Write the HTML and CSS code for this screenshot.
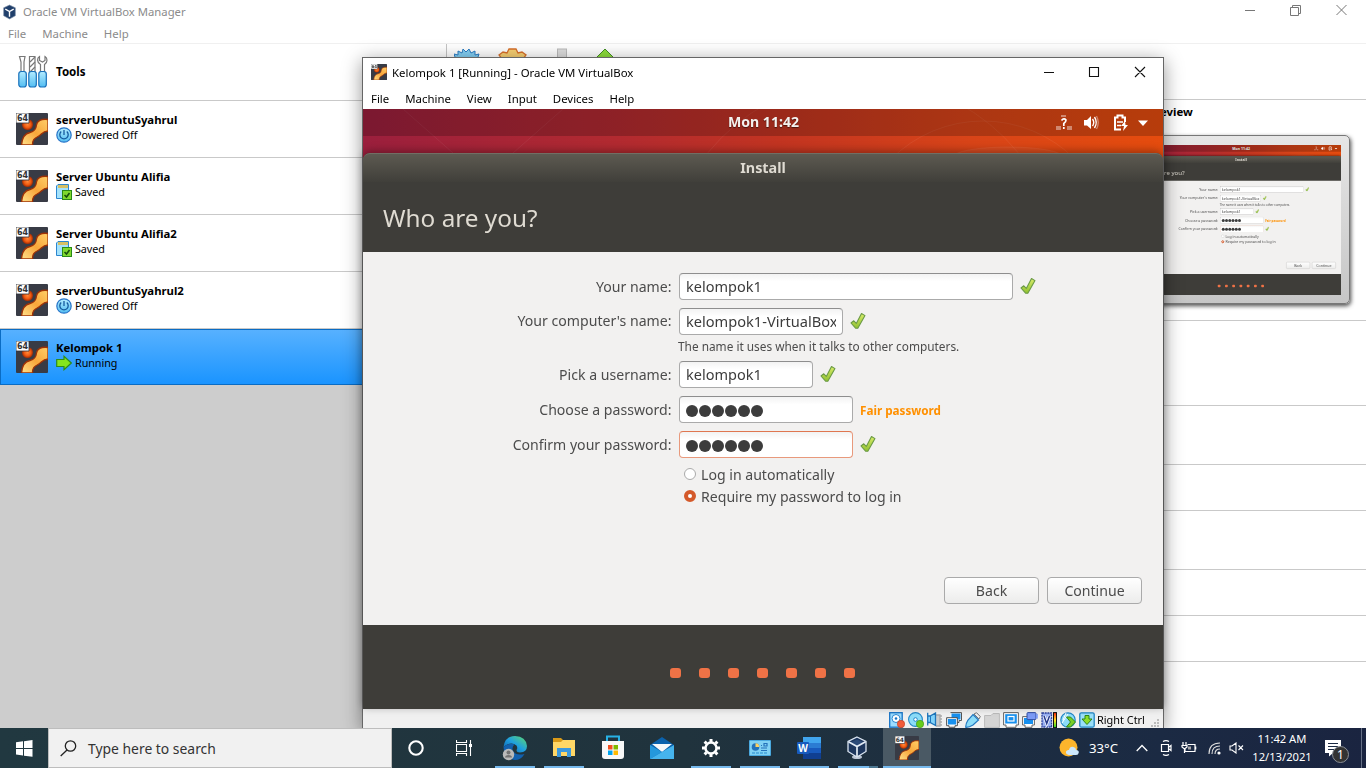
FILE: index.html
```
<!DOCTYPE html>
<html lang="en">
<head>
<meta charset="utf-8">
<title>Oracle VM VirtualBox Manager</title>
<link rel="stylesheet" href="styles.css">
</head>
<body>
<svg class="defs" width="0" height="0" aria-hidden="true">
  <defs>
    <linearGradient id="gold" x1="0" y1="1" x2="1" y2="0"><stop offset="0" stop-color="#ffe08a"/><stop offset=".5" stop-color="#f8a63a"/><stop offset="1" stop-color="#ffcf68"/></linearGradient>
    <radialGradient id="ball"><stop offset="0" stop-color="#ff8a3c"/><stop offset=".6" stop-color="#f05a10"/><stop offset="1" stop-color="#a32c04"/></radialGradient>
    <linearGradient id="sky" x1="0" y1="0" x2="0" y2="1"><stop offset="0" stop-color="#b4ecff"/><stop offset="1" stop-color="#52bdf2"/></linearGradient>
    <linearGradient id="tick" x1="0" y1="0" x2="0" y2="1"><stop offset="0" stop-color="#d9ec6a"/><stop offset="1" stop-color="#8fc02f"/></linearGradient>
    <linearGradient id="edge" x1="0" y1="1" x2="1" y2="0"><stop offset="0" stop-color="#0c59a4"/><stop offset=".5" stop-color="#1f9fe0"/><stop offset="1" stop-color="#5fdc6a"/></linearGradient>
    <linearGradient id="heat" x1="0" y1="0" x2="0" y2="1"><stop offset="0" stop-color="#f21"/><stop offset=".5" stop-color="#fd2"/><stop offset="1" stop-color="#2d2"/></linearGradient>
  </defs>
  <symbol id="ubuntu" viewBox="0 0 32 32">
    <rect width="32" height="32" rx="1" fill="#383b45"/>
    <path d="M32 6.500C25 5.500 21 8 20.500 12C20 17 18 18.500 14 19.500C8 20.500 6 26 5.500 32H16.500C16.500 27 18 25.500 22 23.500C26 21.500 26 18.500 32 18Z" fill="url(#gold)" stroke="#9e3206" stroke-width="1.300"/>
    <circle cx="11.500" cy="11.500" r="5.500" fill="url(#ball)"/>
    <path d="M0 0H13V10H0Z" fill="#fff" stroke="#30323a" stroke-width=".8"/>
    <text class="bits" x="6.500" y="8.200" text-anchor="middle">64</text>
  </symbol>
  <symbol id="power" viewBox="0 0 16 16">
    <circle cx="8" cy="8" r="7.200" fill="url(#sky)" stroke="#2775c9" stroke-width="1.200"/>
    <path d="M5.200 4.600A4.200 4.200 0 1 0 10.800 4.600M8 3V8" fill="none" stroke="#155a9e" stroke-width="1.300"/>
  </symbol>
  <symbol id="saved" viewBox="0 0 16 16">
    <path d="M.5 2L2 .5H12.500V14.500H.5Z" fill="#a5e2fb" stroke="#2c86cf"/>
    <path d="M3 1V4M5 1V4M7 1V4M9 1V4M11 1V4" stroke="#f2ae12" stroke-width="1.300"/>
    <rect x="6.500" y="6.500" width="9" height="9" fill="#7fd92f" stroke="#2b8a17"/>
    <path d="M8.500 11L10.500 13L13.500 9" fill="none" stroke="#174d0c" stroke-width="1.600"/>
  </symbol>
  <symbol id="running" viewBox="0 0 16 16"><path d="M.7 4.500H8V1.300L15.300 8L8 14.700V11.500H.7Z" fill="#85e51f" stroke="#2e8b18" stroke-width="1.200"/></symbol>
  <symbol id="check" viewBox="0 0 16 18"><path d="M1 11L3.800 8.800L6.300 11.400L11.500 1.500L15 3.600L7.800 16.300H5.800Z" fill="url(#tick)" stroke="#6a9a45" stroke-width="1.100" stroke-linejoin="round"/></symbol>
  <symbol id="cube" viewBox="0 0 20 24">
    <ellipse cx="10" cy="21" rx="5" ry="2" fill="#b9c3d3"/>
    <path d="M10 1L19 5.500V15.500L10 21L1 15.500V5.500Z" fill="#1d365d" stroke="#dbe5f2" stroke-width="1.300"/>
    <path d="M3 6.500L10 3.500L17 6.500L10 10Z" fill="#2b4a78"/>
    <path d="M1.500 5.700L10 10.500L18.500 5.700M10 10.500V20" fill="none" stroke="#e3ebf5" stroke-width="1.700"/>
  </symbol>
</svg>

<div class="desktop">
  <main class="manager">
    <header class="manager-title">
      <svg class="app-icon" viewBox="0 0 14 16"><path d="M7 .5L13.300 3.500V12L7 15.500L.7 12V3.500Z" fill="#203f6b" stroke="#8495ac" stroke-width=".7"/><path d="M2.500 5L7 7.500L11.500 5M7 7.500V13" fill="none" stroke="#fff" stroke-width="1.500"/></svg>
      <span>Oracle VM VirtualBox Manager</span>
      <svg class="caption-buttons" viewBox="0 0 104 12"><path d="M0 6.500H10M45.500 3.500H53.500V11.500H45.500ZM47.500 3.500V1.500H55.500V9.500H53.500M91.500 1L101.500 11M101.500 1L91.500 11" fill="none" stroke="#777"/></svg>
    </header>
    <nav class="manager-menu"><span>File</span><span>Machine</span><span>Help</span></nav>
    <div class="manager-body">
      <aside class="machines">
        <div class="machine tools">
          <svg class="tools-icon" viewBox="0 0 30 34">
            <g fill="#fff" stroke="#777" stroke-width="1.200"><path d="M1.500 1.500H7L6 7V17H3V7Z"/><path d="M11.500 1.500H17V17H11.500Z"/><path d="M22.500 17V9.500C18.500 7 19 3 21.500 1.500V5.500L24.500 7L27 5.500V1.500C29.500 3 30 7 26.500 9.500V17Z"/><path d="M12 7L17 2M12 12L17 7M12 17L17 12"/></g>
            <g fill="url(#sky)" stroke="#1770bb" stroke-width="1.200"><rect x=".8" y="16.500" width="7.500" height="15.500" rx="2.500"/><rect x="10.800" y="16.500" width="7.500" height="15.500" rx="2.500"/><rect x="20.800" y="16.500" width="7.500" height="15.500" rx="2.500"/></g>
          </svg>
          <b>Tools</b>
        </div>
        <div class="machine"><svg class="os"><use href="#ubuntu"/></svg><div><b>serverUbuntuSyahrul</b><p><svg><use href="#power"/></svg>Powered Off</p></div></div>
        <div class="machine"><svg class="os"><use href="#ubuntu"/></svg><div><b>Server Ubuntu Alifia</b><p><svg><use href="#saved"/></svg>Saved</p></div></div>
        <div class="machine"><svg class="os"><use href="#ubuntu"/></svg><div><b>Server Ubuntu Alifia2</b><p><svg><use href="#saved"/></svg>Saved</p></div></div>
        <div class="machine"><svg class="os"><use href="#ubuntu"/></svg><div><b>serverUbuntuSyahrul2</b><p><svg><use href="#power"/></svg>Powered Off</p></div></div>
        <div class="machine selected"><svg class="os"><use href="#ubuntu"/></svg><div><b>Kelompok 1</b><p><svg><use href="#running"/></svg>Running</p></div></div>
      </aside>
      <section class="details">
        <div class="toolbar">
          <svg viewBox="0 0 170 30">
            <path d="M0 6L4 7L4 3L8 5L9 1L12 4L15 1L17 5L21 3L21 7L25 6L23 12V25H2V12Z" fill="#83cff3" stroke="#2a7cc4"/>
            <path d="M45 7L49 4L53 5L55 1H62L64 5L68 4L72 7L69 11V25H48V11Z" fill="#f7cf72" stroke="#d8702a" stroke-width="1.300"/>
            <rect x="103.500" y="1" width="9" height="25" fill="#ddd" stroke="#bbb"/>
            <path d="M151 1L164 14L151 26L138 14Z" fill="#8edf3c" stroke="#438e22"/>
          </svg>
        </div>
        <div class="preview-section">
          <b>Preview</b>
          <div class="monitor"><div class="monitor-screen" id="preview-screen"></div></div>
        </div>
        <div class="detail h85"></div><div class="detail h59"></div><div class="detail h46"></div><div class="detail h59"></div><div class="detail h46"></div><div class="detail h46"></div>
      </section>
    </div>
  </main>

  <section class="vm-window">
    <header class="vm-title">
      <svg class="vm-icon"><use href="#ubuntu"/></svg>
      <span>Kelompok 1 [Running] - Oracle VM VirtualBox</span>
      <svg class="caption-buttons" viewBox="0 0 104 12"><path d="M0 6.500H10M45.500 1.500H54.500V10.500H45.500ZM91 1L101 11M101 1L91 11" fill="none" stroke="#111" stroke-width="1.100"/></svg>
    </header>
    <nav class="vm-menu"><span>File</span><span>Machine</span><span>View</span><span>Input</span><span>Devices</span><span>Help</span></nav>

    <div class="guest" id="guest">
      <div class="wallpaper">
        <svg class="rings" viewBox="0 0 800 50" fill="none" stroke="#fff" stroke-opacity=".06"><circle cx="620" cy="142" r="130"/><circle cx="500" cy="170" r="200"/><path d="M40 0L90 44M200 0L150 44"/><ellipse cx="645" cy="48" rx="55" ry="10" fill="#fff" fill-opacity=".04"/></svg>
        <div class="top-panel">
          <span class="clock">Mon 11:42</span>
          <svg class="indicators" viewBox="0 0 100 20">
            <g fill="#fff" opacity=".4"><rect x="1" y="13" width="5" height="4"/><rect x="12" y="13" width="5" height="4"/><rect x="6" y="2" width="5" height="2"/></g>
            <path d="M6.500 7.500Q9 4.500 11 7Q11 9 8.800 10.500V13M8.800 14V16" fill="none" stroke="#fff" stroke-width="1.700"/>
            <path d="M29 7H32L36 3V16L32 12.500H29Z" fill="#fff"/><path d="M37.500 6Q40 9.500 37.500 13M39.500 4Q43 9.500 39.500 15" fill="none" stroke="#fff" stroke-width="1.400"/><path d="M41.500 3Q45 9.500 41.500 16" fill="none" stroke="#fff" stroke-opacity=".4" stroke-width="1.300"/>
            <path d="M66 16.500H60V4.500H62.500V2.500H67.500V4.500H70V9" fill="none" stroke="#fff" stroke-width="2"/><path d="M62 9H68M62 12.500H66" stroke="#fff" stroke-width="1.500"/><path d="M70 8L66 13H69L68 18L73 12H70.500Z" fill="#fff"/>
            <path d="M83 7.500H93L88 13Z" fill="#fff"/>
          </svg>
        </div>
      </div>
      <div class="installer">
        <div class="installer-title">Install</div>
        <h1>Who are you?</h1>
        <div class="form">
          <div class="row"><label>Your name:</label><span class="entry w-name">kelompok1</span><svg class="ok"><use href="#check"/></svg></div>
          <div class="row tight"><label class="raised">Your computer's name:</label><span class="entry w-host"><i>kelompok1-VirtualBox</i></span><svg class="ok"><use href="#check"/></svg></div>
          <p class="hint">The name it uses when it talks to other computers.</p>
          <div class="row"><label>Pick a username:</label><span class="entry w-user">kelompok1</span><svg class="ok"><use href="#check"/></svg></div>
          <div class="row"><label>Choose a password:</label><span class="entry w-pass dots"><i></i><i></i><i></i><i></i><i></i><i></i></span><span class="strength">Fair password</span></div>
          <div class="row tight"><label>Confirm your password:</label><span class="entry w-pass dots focus"><i></i><i></i><i></i><i></i><i></i><i></i></span><svg class="ok"><use href="#check"/></svg></div>
          <div class="radios">
            <div class="radio"><span class="knob"></span>Log in automatically</div>
            <div class="radio"><span class="knob on"></span>Require my password to log in</div>
          </div>
          <div class="actions"><span class="button">Back</span><span class="button">Continue</span></div>
        </div>
        <div class="steps"><i></i><i></i><i></i><i></i><i></i><i></i><i></i></div>
      </div>
    </div>

    <footer class="vm-status">
      <svg viewBox="0 0 16 16"><rect x=".7" y=".7" width="12.500" height="14.500" fill="#9cdcff" stroke="#1673c6" stroke-width="1.300"/><circle cx="7" cy="6.500" r="4" fill="#fff" stroke="#2a87d0"/><circle cx="7" cy="6.500" r="1.300" fill="#1673c6"/><circle cx="12" cy="12" r="3.700" fill="#f25a38" stroke="#c23a1c" stroke-width=".6"/></svg>
      <svg viewBox="0 0 16 16"><circle cx="7.500" cy="7.500" r="6.900" fill="#8bdcf8" stroke="#2487c7" stroke-width="1.100"/><circle cx="7.500" cy="7.500" r="1.800" fill="#fff" stroke="#2487c7"/><circle cx="12" cy="12" r="3.700" fill="#67cc1c" stroke="#3d9312" stroke-width=".6"/></svg>
      <svg viewBox="0 0 16 16"><path d="M9 3H13V14H9M13 4H15M13 7H15M13 10H15M13 13H15" fill="#ccc" stroke="#aaa" stroke-width="1.300"/><path d="M.7.700V13.500M.7 4H3L8.500 1V13.500L3 10.500H.7Z" fill="#80d2fa" stroke="#1d75bb" stroke-width="1.300"/><path d="M3.500 4V11" stroke="#1d75bb"/></svg>
      <svg viewBox="0 0 16 16"><path d="M5 1H15V8H5Z" fill="#1790ee" stroke="#fff"/><path d="M4.500.6H15.500V8.500H13V10.500H10" fill="none" stroke="#555"/><path d="M1.300 6.500H10.700V13H1.300Z" fill="#1790ee" stroke="#fff"/><path d="M.6 5.700H11.400V13.700H9V15.300H3V13.700H.6Z" fill="none" stroke="#555"/></svg>
      <svg viewBox="0 0 16 16"><path d="M9 2L11.500.7L15.300 4.500L14 7Z" fill="#eee" stroke="#777"/><path d="M8 2.500L13.500 8L8 13Q4 15.500.8 15.300Q.5 12 3 8Z" fill="#8bdcf8" stroke="#2178c0" stroke-width="1.200"/></svg>
      <svg viewBox="0 0 16 16"><path d="M.6 3.500H7L9 1.500H15.400V15.400H.6Z" fill="#d4d4d4" stroke="#bbb"/></svg>
      <svg viewBox="0 0 16 16"><path d="M.6.6H15.400V13H13V15.300H3V13H.6Z" fill="#fff" stroke="#666"/><rect x="2.200" y="2.200" width="11.600" height="9.300" fill="#1790ee"/><rect x="5" y="4.500" width="6" height="4.500" fill="#1790ee" stroke="#fff" stroke-width="1.200"/></svg>
      <svg viewBox="0 0 16 16"><path d="M.6 4.600H12.400V13H10V15.300H3V13H.6Z" fill="#fff" stroke="#666"/><rect x="2" y="6" width="9" height="6" fill="#1790ee"/><rect x="5" y=".6" width="9" height="7" rx="1" fill="#7b9af5" stroke="#334fa3"/><path d="M14 3L15.800 1.500V7L14 5.500" fill="#7b9af5"/></svg>
      <svg viewBox="0 0 16 16"><rect x="1" y="1" width="9.500" height="14" fill="#98aff1" stroke="#2f439d" stroke-width="1.300" stroke-dasharray="2 .7"/><path d="M3 4L5.700 11.500L8.500 4" fill="none" stroke="#fff" stroke-width="3"/><path d="M3 4L5.700 11.500L8.500 4" fill="none" stroke="#24388b" stroke-width="1.500"/><rect x="12.500" y=".6" width="3" height="15" fill="url(#heat)" stroke="#111"/></svg>
      <svg viewBox="0 0 16 16"><circle cx="8" cy="8" r="7.200" fill="#8cdcfa" stroke="#2487c7" stroke-width="1.200"/><path d="M2 11L8 2M6 1L3 8" stroke="#fff"/><path d="M6.500 5H10.500L15.500 10L10.500 15H6.500L10.500 10Z" fill="#78ce27" stroke="#318516"/></svg>
      <svg viewBox="0 0 16 16"><rect x=".8" y=".8" width="14.400" height="14.400" rx="1.500" fill="#9adff9" stroke="#2184c3" stroke-width="1.300"/><path d="M6 3.500H10V7H13L8 12.500L3 7H6Z" fill="#8bdc28" stroke="#2f8517"/></svg>
      <span>Right Ctrl</span>
      <svg class="grip" viewBox="0 0 9 9"><path d="M6 0H8V2H6ZM3 3H5V5H3ZM6 3H8V5H6ZM0 6H2V8H0ZM3 6H5V8H3ZM6 6H8V8H6Z" fill="#bbb"/></svg>
    </footer>
  </section>

  <footer class="taskbar">
    <div class="start"><svg width="17" height="17" viewBox="0 0 17 17"><path d="M0 2.300L7 1.300V8H0ZM8 1.200L16.500 0V8H8ZM0 9H7V15.500L0 14.600ZM8 9H16.500V16.800L8 15.700Z" fill="#fff"/></svg></div>
    <div class="search"><svg width="17" height="17" viewBox="0 0 17 17"><circle cx="10.500" cy="6" r="5.200" fill="none" stroke="#222" stroke-width="1.300"/><path d="M7 10L.7 16" stroke="#222" stroke-width="1.300"/></svg><span>Type here to search</span></div>
    <div class="task cortana"><svg width="16" height="16" viewBox="0 0 16 16"><circle cx="8" cy="8" r="6.700" fill="none" stroke="#fff" stroke-width="2.100"/></svg></div>
    <div class="task view"><svg width="16" height="16" viewBox="0 0 16 16"><path d="M.5 0V2.500H10.500V0M.5 16V13.500H10.500V16M.5 4.500H10.500V11.500H.5ZM14.500 0V16" fill="none" stroke="#fff" stroke-width="1.100"/><rect x="13" y="4" width="3" height="3" fill="#fff"/></svg></div>
    <div class="task open"><svg width="26" height="26" viewBox="0 0 26 26"><path d="M1.500 12Q3 1 13 1Q24 1.500 25 11Q25 17 18 17.500Q14.500 17.500 14.500 15Q16 13 14.500 10.500Q9 6 1.500 12Z" fill="url(#edge)"/><path d="M1.500 12Q7 7 12.500 9.500Q9.500 12 11 16Q14 21 22.500 19Q19 25 13 25Q2 24 1.500 12Z" fill="#1260ae"/><circle cx="6.500" cy="19.500" r="5.700" fill="#b9b9b9"/><circle cx="6.500" cy="17.500" r="2" fill="#727272"/><path d="M3 22.500Q3 20 6.500 20T10 22.500Z" fill="#727272"/></svg></div>
    <div class="task open"><svg width="22" height="20" viewBox="0 0 22 20"><path d="M0 0H8L10 2H22V18H0Z" fill="#d99a18"/><path d="M0 4H8L10 2H22V18H0Z" fill="#ffd766"/><path d="M4 19V10H18V19H14V14H8V19Z" fill="#3c99dd"/></svg></div>
    <div class="task"><svg width="24" height="25" viewBox="0 0 24 25"><path d="M6 7V1.500H18V7" fill="none" stroke="#27b2e6" stroke-width="2"/><path d="M1 6H23V21Q23 24 20 24H4Q1 24 1 21Z" fill="#f8f8f8"/><path d="M7 10H11.500V14.500H7Z" fill="#f25022"/><path d="M12.500 10H17V14.500H12.500Z" fill="#7fba00"/><path d="M7 15.500H11.500V20H7Z" fill="#00a4ef"/><path d="M12.500 15.500H17V20H12.500Z" fill="#ffb900"/></svg></div>
    <div class="task"><svg width="24" height="24" viewBox="0 0 24 24"><path d="M0 9L12 1L24 9V23H0Z" fill="#0b62ac"/><path d="M2 8H22L12 16Z" fill="#f5f8fa"/><path d="M0 9L12 16L0 23Z" fill="#2498dc"/><path d="M24 9L0 23H24Z" fill="#46b4ed"/></svg></div>
    <div class="task open"><svg width="20" height="20" viewBox="-10 -10 20 20"><circle r="5.500" fill="none" stroke="#fff" stroke-width="2.500"/><path d="M0-9V-6M0 9V6M-9 0H-6M9 0H6M-6.400-6.400L-4.500-4.500M6.400-6.400L4.500-4.500M-6.400 6.400L-4.500 4.500M6.400 6.400L4.500 4.500" stroke="#fff" stroke-width="3"/></svg></div>
    <div class="task open"><svg width="22" height="16" viewBox="0 0 22 16"><rect width="22" height="16" rx="1" fill="#4aa9df"/><rect x="1" y="1" width="20" height="14" fill="#80d1f4"/><circle cx="6.500" cy="7" r="3.800" fill="#2472ba"/><path d="M6.500 7V3.200A3.800 3.800 0 0 1 10.300 7Z" fill="#ffd160"/><path d="M12 8H18M12 10.500H18M12 5.500H13M15 3.500H18V6H15Z" fill="none" stroke="#2472ba" stroke-width="1.200"/><path d="M3 13H18" stroke="#268bce" stroke-dasharray="3 1"/></svg></div>
    <div class="task open"><svg class="word" width="24" height="22" viewBox="0 0 24 22"><path d="M6 0H24V6H6Z" fill="#41a5ee"/><path d="M6 6H24V11H6Z" fill="#2b7cd3"/><path d="M6 11H24V16H6Z" fill="#185abd"/><path d="M6 16H24V22H6Z" fill="#103f91"/><rect y="5" width="12" height="12" rx="1" fill="#185abd"/><text x="6" y="14.500" text-anchor="middle">W</text></svg></div>
    <div class="task open split"><svg width="20" height="24"><use href="#cube"/></svg></div>
    <div class="task open active"><svg width="24" height="24"><use href="#ubuntu"/></svg></div>
    <div class="tray">
      <svg class="weather" width="20" height="20" viewBox="0 0 20 20"><circle cx="9.500" cy="9.500" r="9" fill="#fdb52c"/><path d="M10 17Q6.500 16.500 7 13.500Q8 11.500 10 12Q11 8 14.500 9Q17 9.500 17 12Q20 12 19.800 14.500Q19.500 17 17 17Z" fill="#cde7fb"/></svg>
      <span class="temp">33°C</span>
      <svg class="chev" width="12" height="8" viewBox="0 0 12 8"><path d="M.7 7L6 1.500L11.300 7" fill="none" stroke="#fff" stroke-width="1.300"/></svg>
      <svg class="meet" width="12" height="16" viewBox="0 0 12 16"><path d="M3 1.500Q6-.3 9 1.500M3 14.500Q6 16.300 9 14.500M1.500 4.500H8.500V11.500H1.500ZM9 7L11 5.500V10.500L9 9" fill="none" stroke="#fff" stroke-width="1.200"/></svg>
      <svg class="battery" width="16" height="12" viewBox="0 0 16 12"><path d="M6.500 2.500H14V9.500H4V7M14.700 4.500V7.500M2 0V3M5 0V3M1 3.500H6V5L3.500 7L1 5ZM3.500 7V11" fill="none" stroke="#fff" stroke-width="1.200"/><rect x="7" y="4.500" width="3" height="3" fill="#aaa"/></svg>
      <svg class="wifi" width="14" height="13" viewBox="0 0 14 13"><g fill="none" stroke="#ddd" stroke-width="1.100"><path d="M1 12Q1 1 12 1"/><path d="M4 12Q4 4 12 4"/><path d="M7 12Q7 7 12 7"/></g><circle cx="11" cy="11" r="1.600" fill="#fff"/></svg>
      <svg class="mute" width="15" height="12" viewBox="0 0 15 12"><path d="M1 4H3L7 1V11L3 8H1ZM9.500 3.500L14 8M14 3.500L9.500 8" fill="none" stroke="#fff" stroke-width="1.100"/></svg>
      <div class="time"><span>11:42 AM</span><span>12/13/2021</span></div>
      <div class="notice"><svg width="16" height="17" viewBox="0 0 16 17"><path d="M0 0H16V13H8L4 16.500V13H0Z" fill="#fff"/><path d="M3 3.500H13M3 6.500H13M3 9.500H9" stroke="#1b2a44" stroke-width="1.200"/></svg><span class="badge">1</span></div>
      <span class="peek"></span>
    </div>
  </footer>
</div>
<script src="preview.js"></script>
</body>
</html>
```
FILE: preview.js
```
// The preview monitor shows a quarter-size copy of the guest screen.
const copy = document.getElementById('guest').cloneNode(true);
copy.removeAttribute('id');
copy.setAttribute('aria-hidden', 'true');
document.getElementById('preview-screen').appendChild(copy);
```
FILE: styles.css
```
* { box-sizing: border-box; }
body { margin: 0; font-family: "Noto Sans", "Open Sans", sans-serif; overflow: hidden; }
p, h1 { margin: 0; }
i { font-style: normal; }
svg { display: block; flex: none; }
.defs { position: absolute; }
.desktop { position: relative; width: 1366px; height: 768px; display: flex; flex-direction: column; overflow: hidden; }
.bits { font: 700 8px "DejaVu Sans", sans-serif; fill: #333; }

/* manager window */
.manager { height: 728px; display: flex; flex-direction: column; background: #fff; }
.manager-title { height: 23px; display: flex; align-items: center; padding: 0 17px 0 3px; font-size: 11.3px; color: #8b8b8b; }
.app-icon { width: 13px; height: 16px; margin-right: 7px; }
.caption-buttons { width: 104px; height: 12px; margin-left: auto; }
.manager-title .caption-buttons { margin-top: -3px; }
.manager-menu { height: 21px; display: flex; align-items: center; gap: 16px; padding-left: 8px; font-size: 11.4px; color: #8b8b8b; border-bottom: 1px solid #f0f0f0; }
.manager-body { flex: 1; min-height: 0; display: flex; }
.machines { width: 447px; background: #cdcdcd; border-right: 1px solid #c4c4c4; }
.machine { height: 57px; display: flex; align-items: center; padding-left: 16px; background: #fff; border-bottom: 1px solid #c9c9c9; font-size: 10.8px; color: #000; }
.machine .os { width: 32px; height: 32px; margin-right: 8px; }
.machine b { display: block; font-size: 11.35px; line-height: 15px; white-space: nowrap; }
.machine p { display: flex; align-items: center; gap: 3px; height: 16px; letter-spacing: -.07px; }
.machine p svg { width: 16px; height: 16px; }
.machine > div { margin-top: -4px; }
.tools b { margin-top: -2px; font-size: 11.6px; }
.tools-icon { width: 30px; height: 34px; margin: 0 8px 0 2px; }
.machine.selected { height: 56px; background: linear-gradient(#57b1ff, #1a94ff); border: 1px solid #0a6cc4; padding-left: 15px; }

.details { flex: 1; background: #fff; }
.toolbar { height: 56px; padding: 4px 0 0 7px; background: #fff; border-bottom: 1px solid #c9c9c9; }
.toolbar svg { width: 170px; height: 30px; }
.preview-section { height: 221px; padding: 3px 0 0 685px; border-bottom: 1px solid #c9c9c9; font-size: 11.4px; }
.preview-section b { display: block; height: 32px; line-height: 18px; padding-left: 16px; }
.monitor { width: 218px; height: 169px; padding: 9px 8px 8px; border-radius: 5px; border: 1px solid #777; background: linear-gradient(#e6e6e6, #c6c6c6); box-shadow: 1px 2px 4px rgba(0,0,0,.7); }
.monitor-screen { width: 200px; height: 150px; overflow: hidden; }
.monitor-screen .guest { transform: scale(.25); transform-origin: 0 0; }
.detail { border-bottom: 1px solid #c9c9c9; }
.h85 { height: 85px; } .h59 { height: 59px; } .h46 { height: 46px; }

/* running machine window, floating over the manager */
.vm-window { position: absolute; left: 362px; top: 57px; width: 802px; height: 671px; border: 1px solid #666; border-bottom: 0; background: #fff; box-shadow: 0 4px 18px rgba(0,0,0,.42); }
.vm-title { height: 30px; display: flex; align-items: center; padding: 0 15px 0 8px; font-size: 11.4px; color: #000; }
.vm-title span { margin-top: -2px; }
.vm-icon { width: 16px; height: 16px; margin: -2px 5px 0 0; }
.vm-title .caption-buttons { margin-top: -2px; }
.vm-menu { height: 21px; display: flex; align-items: center; gap: 16px; padding: 0 0 1px 8px; font-size: 11.4px; color: #000; }
.vm-status { height: 19px; display: flex; align-items: center; gap: 3px; padding: 3px 3px 0 526px; background: #f0f0f0; font-size: 10.9px; color: #000; }
.vm-status svg { width: 16px; height: 16px; }
.vm-status span { margin: -2px 0 0 -1px; white-space: nowrap; }
.vm-status .grip { width: 9px; height: 9px; margin: 7px 0 0 auto; }

/* guest desktop */
.guest { width: 800px; height: 600px; position: relative; color: #4c4c4c; font-size: 14.1px; background: linear-gradient(90deg, #9b1f3d, #b22a30 32%, #c23421 52%, #d84418 76%, #e54c0e); }
.wallpaper { height: 44px; }
.rings { position: absolute; left: 0; top: 0; width: 800px; height: 50px; }
.top-panel { position: relative; height: 27px; display: flex; justify-content: flex-end; align-items: center; padding-right: 8px; background: rgba(0,0,0,.2); color: #f4f1ee; }
.clock { position: absolute; left: 0; right: 0; padding-left: 1px; text-align: center; font-weight: 700; line-height: 25px; height: 27px; text-shadow: 0 1px 1px rgba(0,0,0,.5); }
.indicators { width: 100px; height: 20px; }
.installer { position: relative; height: 556px; display: flex; flex-direction: column; background: #3e3d39; border-radius: 7px 7px 0 0; box-shadow: 0 -2px 8px rgba(0,0,0,.35); }
.installer-title { height: 29px; line-height: 27px; text-align: center; font-weight: 700; font-size: 14.4px; color: #dfdbd2; background: linear-gradient(#5d5a51, #403f3a); border-top: 1px solid #716e64; border-radius: 7px 7px 0 0; }
.installer h1 { height: 70px; line-height: 71px; padding-left: 20px; font-size: 24.3px; font-weight: 400; color: #dfdbd2; }
.form { height: 373px; background: #f2f1f0; padding-top: 21px; }
.row { height: 27px; display: flex; align-items: center; margin-bottom: 8px; }
.row.tight { margin-bottom: 0; }
.row label { width: 308.5px; margin-right: 7.5px; text-align: right; white-space: nowrap; }
.row label.raised { padding-bottom: 2px; }
.entry { height: 27px; display: flex; align-items: center; padding: 0 6px 2px; border: 1px solid #aaa; border-top-color: #8e8e8e; border-radius: 4px; background: linear-gradient(#f3f3f3, #fff 30%); font-size: 14.5px; color: #3c3c3c; }
.entry.focus { border-color: #e8997c; border-top-color: #df7650; }
.w-name { width: 334px; } .w-host { width: 164px; } .w-user { width: 134px; } .w-pass { width: 174px; }
.w-host i { width: 151px; overflow: hidden; font-size: 14.6px; white-space: nowrap; }
.dots { gap: 1px; padding: 3px 0 0 6px; }
.dots i { width: 12px; height: 12px; border-radius: 50%; background: #3c3c3c; }
.ok { width: 16px; height: 18px; margin-left: 7px; margin-top: -2px; }
.strength { margin-left: 7px; color: #ff9000; font-weight: 700; font-size: 11.7px; }
.hint { height: 26px; line-height: 23px; padding-left: 315px; font-size: 11.83px; }
.radios { height: 50px; padding: 5px 0 0 321px; }
.radio { height: 22px; display: flex; align-items: center; gap: 5px; }
.knob { width: 12px; height: 12px; border-radius: 50%; border: 1px solid #aaa; background: #fff; }
.knob.on { border: 4px solid #d4592a; }
.actions { display: flex; justify-content: flex-end; gap: 8px; padding: 69px 21px 0 0; }
.button { width: 95px; height: 27px; line-height: 25px; text-align: center; border: 1px solid #aaa; border-radius: 4px; background: linear-gradient(#fff, #ececeb); }
.steps { flex: 1; display: flex; justify-content: center; align-items: center; gap: 18px; padding: 12px 2px 0 0; }
.steps i { width: 11px; height: 10px; border-radius: 3px; background: #ef7246; }

/* taskbar */
.taskbar { position: relative; height: 40px; display: flex; background: linear-gradient(90deg, #213840, #20333d 50%, #1b2a43 85%, #1a2440); color: #fff; }
.start { width: 48px; display: flex; align-items: center; justify-content: center; }
.search { width: 344px; border: 1px solid #bdbdbd; background: #f1f1f1; display: flex; align-items: center; gap: 11px; padding-left: 11px; font-size: 13.9px; color: #333; }
.task { width: 49px; display: flex; align-items: center; justify-content: center; border-bottom: 2px solid transparent; padding: 1px 2px 0 0; }
.cortana { width: 48px; padding-right: 0; }
.view { width: 48px; padding-right: 0; margin-right: 3px; }
.open { position: relative; }
.open::after { content: ""; position: absolute; left: 4px; right: 5px; bottom: -2px; height: 2px; background: #76b9ed; }
.split::after { right: 14px; box-shadow: 9px 0 #4c7791; }
.split { padding-right: 4px; }
.active { background: #4a5964; width: 48px; padding-right: 0; }
.active::after { left: 0; right: 0; }
.word text { font: 700 10px "Noto Sans", sans-serif; fill: #fff; }
.tray { margin-left: auto; display: flex; align-items: center; font-size: 13.2px; }
.temp { margin-left: 10px; }
.chev { margin-left: 18px; }
.meet { margin-left: 12px; }
.battery { margin-left: 9px; }
.wifi { margin-left: 11px; }
.mute { margin-left: 7px; }
.time { width: 58px; margin-left: 9px; display: flex; flex-direction: column; align-items: center; font-size: 11.2px; line-height: 18px; white-space: nowrap; }
.notice { position: relative; margin-left: 14px; width: 36px; }
.badge { position: absolute; left: 7px; top: 6px; width: 17px; height: 17px; border-radius: 50%; border: 1px solid #8a8f96; background: #333; font-size: 12px; line-height: 15px; text-align: center; }
.peek { align-self: stretch; width: 5px; border-left: 1px solid #667085; }
```
